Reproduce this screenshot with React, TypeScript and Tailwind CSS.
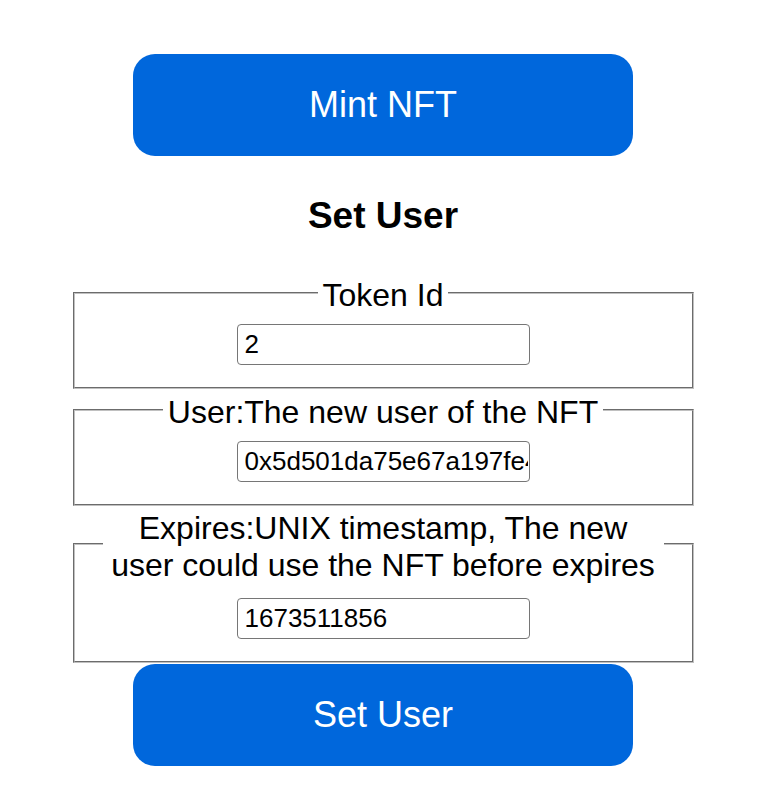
import React from "react";

const font = { fontFamily: '"Liberation Sans", Arial, sans-serif' };

function Field({ label, value, className }: { label: string; value: string; className: string }) {
  return (
    <fieldset
      className={`w-[621px] border-[2px] [border-style:groove]! border-[#c0c0c0] px-[28px] pb-[22px] flex flex-col items-center ${className}`}
    >
      <legend className="mx-auto px-[5px] pt-[6px] text-[32px] leading-[37px] text-black text-center">
        {label}
      </legend>
      <input
        type="text"
        defaultValue={value}
        className="w-[293px] h-[41px] border border-[#767676] rounded-[4px] pl-[7px] pr-[1px] text-[26px] text-black bg-white outline-none"
      />
    </fieldset>
  );
}

export default function App() {
  return (
    <div style={font} className="w-[766px] min-h-[808px] bg-white flex flex-col items-center pt-[54px]">
      <button className="w-[500px] h-[102px] rounded-[22px] bg-[#0067dc] text-white text-[36px]">
        Mint NFT
      </button>

      <h1 className="mt-[39px] text-[37px] leading-[42px] font-bold text-black">Set User</h1>

      <Field label="Token Id" value="2" className="mt-[34px] pt-[10px]" />
      <Field
        label="User:The new user of the NFT"
        value="0x5d501da75e67a197fe4c1a2b3d9e8f7061a2b3c4"
        className="mt-[-1px] pt-[10px]"
      />
      <Field
        label="Expires:UNIX timestamp, The new user could use the NFT before expires"
        value="1673511856"
        className="mt-[-2px] pt-[14px]"
      />

      <button className="mt-[1px] w-[500px] h-[102px] rounded-[22px] bg-[#0067dc] text-white text-[36px]">
        Set User
      </button>
    </div>
  );
}
